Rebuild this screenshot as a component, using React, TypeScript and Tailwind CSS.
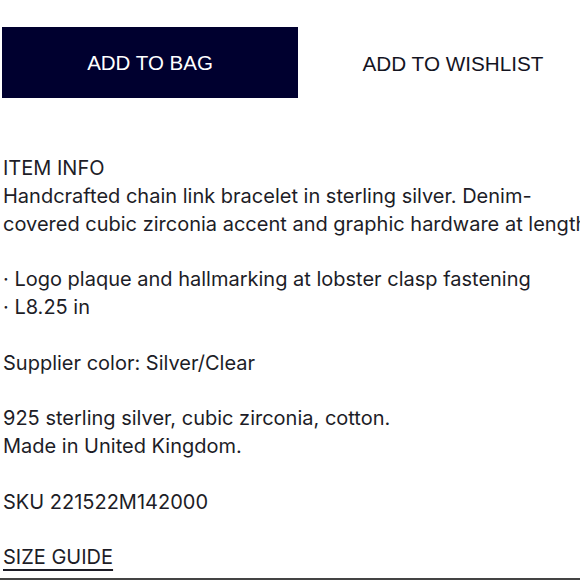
export default function App() {
  return (
    <div className="w-[580px] h-[580px] overflow-hidden bg-white relative font-['Inter','Liberation_Sans',sans-serif] text-[#1d1d27]">
      <div className="flex gap-[7px] pt-[27px] pl-[2px] w-[620px]">
        <button className="w-[296px] h-[71px] pt-[2px] bg-[#00002f] text-white text-[20.5px] font-['Liberation_Sans',sans-serif] shrink-0">
          ADD TO BAG
        </button>
        <button className="w-[296px] h-[71px] pt-[2px] text-[#14141f] text-[20.7px] font-['Liberation_Sans',sans-serif] shrink-0">
          ADD TO WISHLIST
        </button>
      </div>

      <div className="pl-[3px] pt-[57px] text-[20px] leading-[27.8px] whitespace-nowrap">
        <p>ITEM INFO</p>
        <p>Handcrafted chain link bracelet in sterling silver. Denim-</p>
        <p>covered cubic zirconia accent and graphic hardware at length.</p>
        <p>&nbsp;</p>
        <p>· Logo plaque and hallmarking at lobster clasp fastening</p>
        <p>· L8.25 in</p>
        <p>&nbsp;</p>
        <p>Supplier color: Silver/Clear</p>
        <p>&nbsp;</p>
        <p>925 sterling silver, cubic zirconia, cotton.</p>
        <p>Made in United Kingdom.</p>
        <p>&nbsp;</p>
        <p>SKU 221522M142000</p>
        <p>&nbsp;</p>
        <p className="underline decoration-[1.5px] underline-offset-[5px]">SIZE GUIDE</p>
      </div>

      <div className="absolute left-0 right-0 bottom-0 h-[2px] bg-[#444]" />
    </div>
  );
}
